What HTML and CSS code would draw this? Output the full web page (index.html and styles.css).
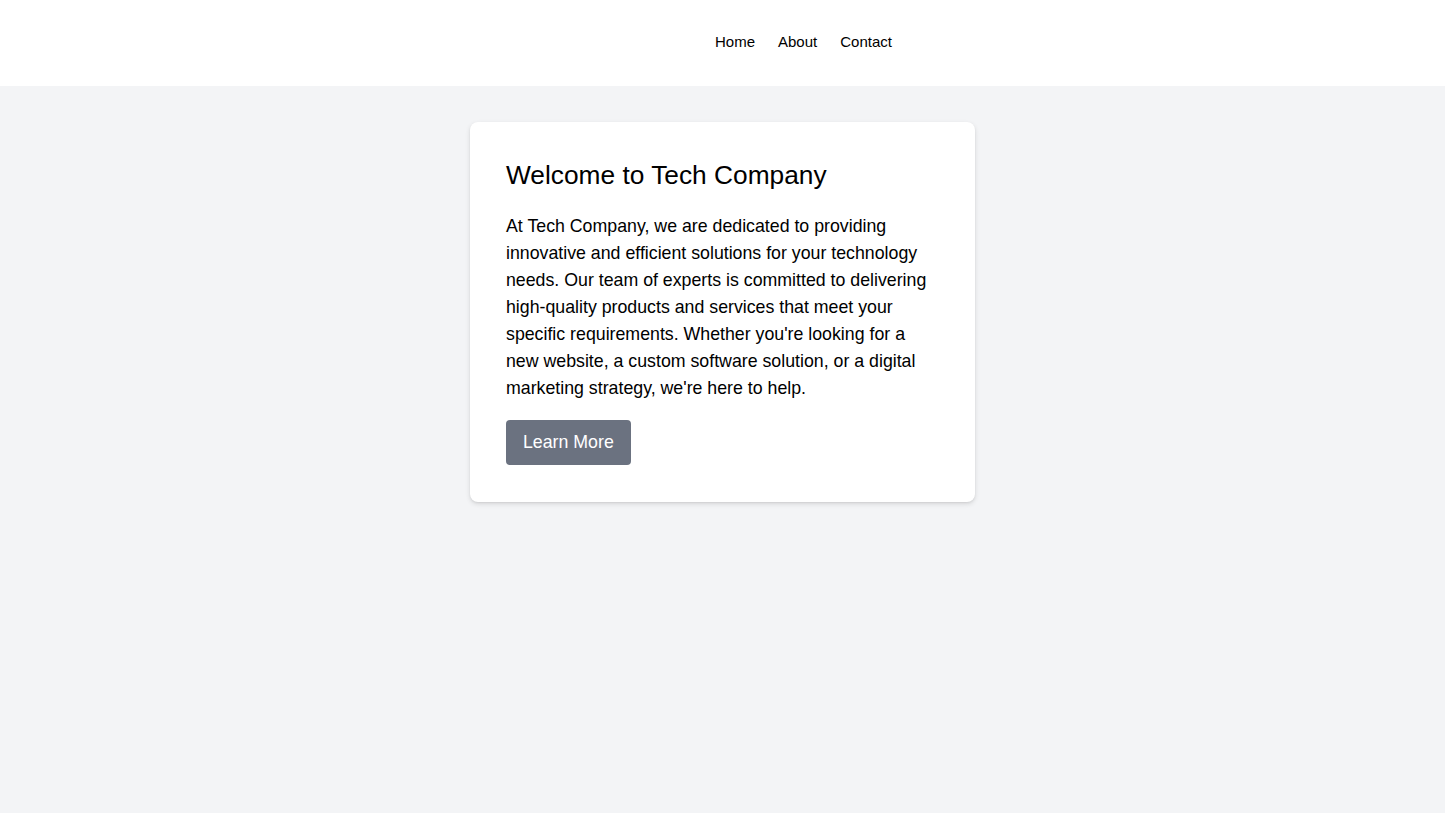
FILE: index.html
```html
<!DOCTYPE html>
<html lang="en">
<head>
  <meta charset="UTF-8">
  <meta name="viewport" content="width=device-width, initial-scale=1.0">
  <title>Tech Company</title>
  <link rel="stylesheet" href="styles.css">
</head>
<body>
  <header class="site-header">
    <nav class="nav">
      <a href="#" class="nav-link">Home</a>
      <a href="#" class="nav-link">About</a>
      <a href="#" class="nav-link">Contact</a>
    </nav>
  </header>

  <main class="main">
    <div class="card">
      <h1 class="card-title">Welcome to Tech Company</h1>
      <p class="card-text">At Tech Company, we are dedicated to providing innovative and efficient solutions for your technology needs. Our team of experts is committed to delivering high-quality products and services that meet your specific requirements. Whether you're looking for a new website, a custom software solution, or a digital marketing strategy, we're here to help.</p>
      <a href="#" class="btn">Learn More</a>
    </div>
  </main>
</body>
</html>
```

FILE: styles.css
```css
* {
  box-sizing: border-box;
}

html, body {
  margin: 0;
  padding: 0;
}

body {
  min-height: 813px;
  background: #f3f4f6;
  font-family: "Liberation Sans", Arial, sans-serif;
  color: #000;
}

a {
  text-decoration: none;
  color: inherit;
}

.site-header {
  height: 86px;
  background: #fff;
  display: flex;
  align-items: center;
  padding-left: 715px;
  padding-bottom: 4px;
}

.nav {
  display: flex;
  gap: 23px;
  font-size: 15px;
}

.main {
  display: flex;
  justify-content: center;
  padding-top: 36px;
}

.card {
  width: 505px;
  padding: 36px 36px 37px;
  background: #fff;
  border-radius: 8px;
  box-shadow: 0 2px 5px rgba(0,0,0,0.12), 0 1px 2px rgba(0,0,0,0.06);
}

.card-title {
  margin: 0 0 21px;
  font-size: 26.3px;
  font-weight: 400;
  line-height: 34px;
}

.card-text {
  margin: 0 0 18px;
  font-size: 17.75px;
  line-height: 27px;
}

.btn {
  display: inline-block;
  padding: 0 17px;
  height: 45px;
  line-height: 45px;
  background: #6b7280;
  color: #fff;
  font-size: 17.75px;
  border-radius: 4px;
}
```
